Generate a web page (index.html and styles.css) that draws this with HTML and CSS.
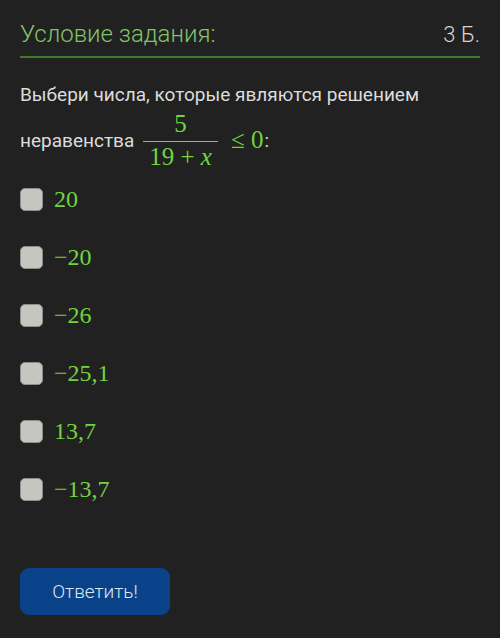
FILE: index.html
```html
<!DOCTYPE html>
<html lang="ru">
<head>
<meta charset="utf-8">
<link rel="stylesheet" href="styles.css">
</head>
<body>
<div class="page">
  <div class="header">
    <span class="title">Условие задания:</span>
    <span class="points">3 Б.</span>
  </div>
  <div class="question">
    <div class="qline">Выбери числа, которые являются решением</div>
    <div class="qline2">неравенства <span class="math"><span class="frac"><span class="num">5</span><span class="den">19 + <i>x</i></span></span><span class="rel">≤ 0</span></span>:</div>
  </div>
  <ul class="options">
    <li class="opt"><span class="box"></span><span class="val">20</span></li>
    <li class="opt"><span class="box"></span><span class="val">−20</span></li>
    <li class="opt"><span class="box"></span><span class="val">−26</span></li>
    <li class="opt"><span class="box"></span><span class="val">−25,1</span></li>
    <li class="opt"><span class="box"></span><span class="val">13,7</span></li>
    <li class="opt"><span class="box"></span><span class="val">−13,7</span></li>
  </ul>
  <button class="submit">Ответить!</button>
</div>
</body>
</html>
```
FILE: styles.css
```css
html, body {
  margin: 0;
  padding: 0;
  background: #212121;
}
.page {
  width: 500px;
  height: 638px;
  box-sizing: border-box;
  padding: 19px 20px 0 20px;
  font-family: Roboto, "Noto Sans", sans-serif;
}
.header {
  display: flex;
  justify-content: space-between;
  align-items: baseline;
  border-bottom: 2px solid #3f7a2c;
  padding-bottom: 7px;
}
.title {
  color: #82c46c;
  font-size: 24px;
  font-weight: 300;
  line-height: 30px;
}
.points {
  color: #d4d4d4;
  font-size: 22px;
  font-weight: 300;
}
.question {
  margin-top: 24px;
  color: #dcdcdc;
  font-size: 19px;
}
.qline {
  line-height: 26px;
}
.qline2 {
  display: flex;
  align-items: center;
  margin-top: 2px;
}
.math {
  display: inline-flex;
  align-items: center;
  color: #6fd43f;
  font-family: "Liberation Serif", "DejaVu Serif", serif;
  font-size: 25px;
  margin-left: 6px;
  margin-right: 1px;
}
.frac {
  display: inline-flex;
  flex-direction: column;
  align-items: center;
  padding: 0 3px;
}
.num {
  line-height: 27px;
  padding-bottom: 4px;
  border-bottom: 1.5px solid #6fd43f;
  width: 100%;
  text-align: center;
}
.den {
  line-height: 26px;
  padding: 2px 6px 0;
}
.rel {
  margin-left: 10px;
}
.options {
  list-style: none;
  margin: 0;
  padding: 0;
}
.opt {
  display: flex;
  align-items: center;
  height: 58px;
}
.box {
  width: 21px;
  height: 21px;
  border: 1px solid #8f8f88;
  border-radius: 5px;
  background: #c6c6c0;
  margin-right: 11px;
}
.val {
  color: #6fd43f;
  font-family: "Liberation Serif", "DejaVu Serif", serif;
  font-size: 24px;
}
.submit {
  margin-top: 50px;
  width: 150px;
  height: 47px;
  border: none;
  border-radius: 9px;
  background: #0a4289;
  color: #dde6f0;
  font-family: Roboto, sans-serif;
  font-weight: 300;
  font-size: 19px;
}
```
